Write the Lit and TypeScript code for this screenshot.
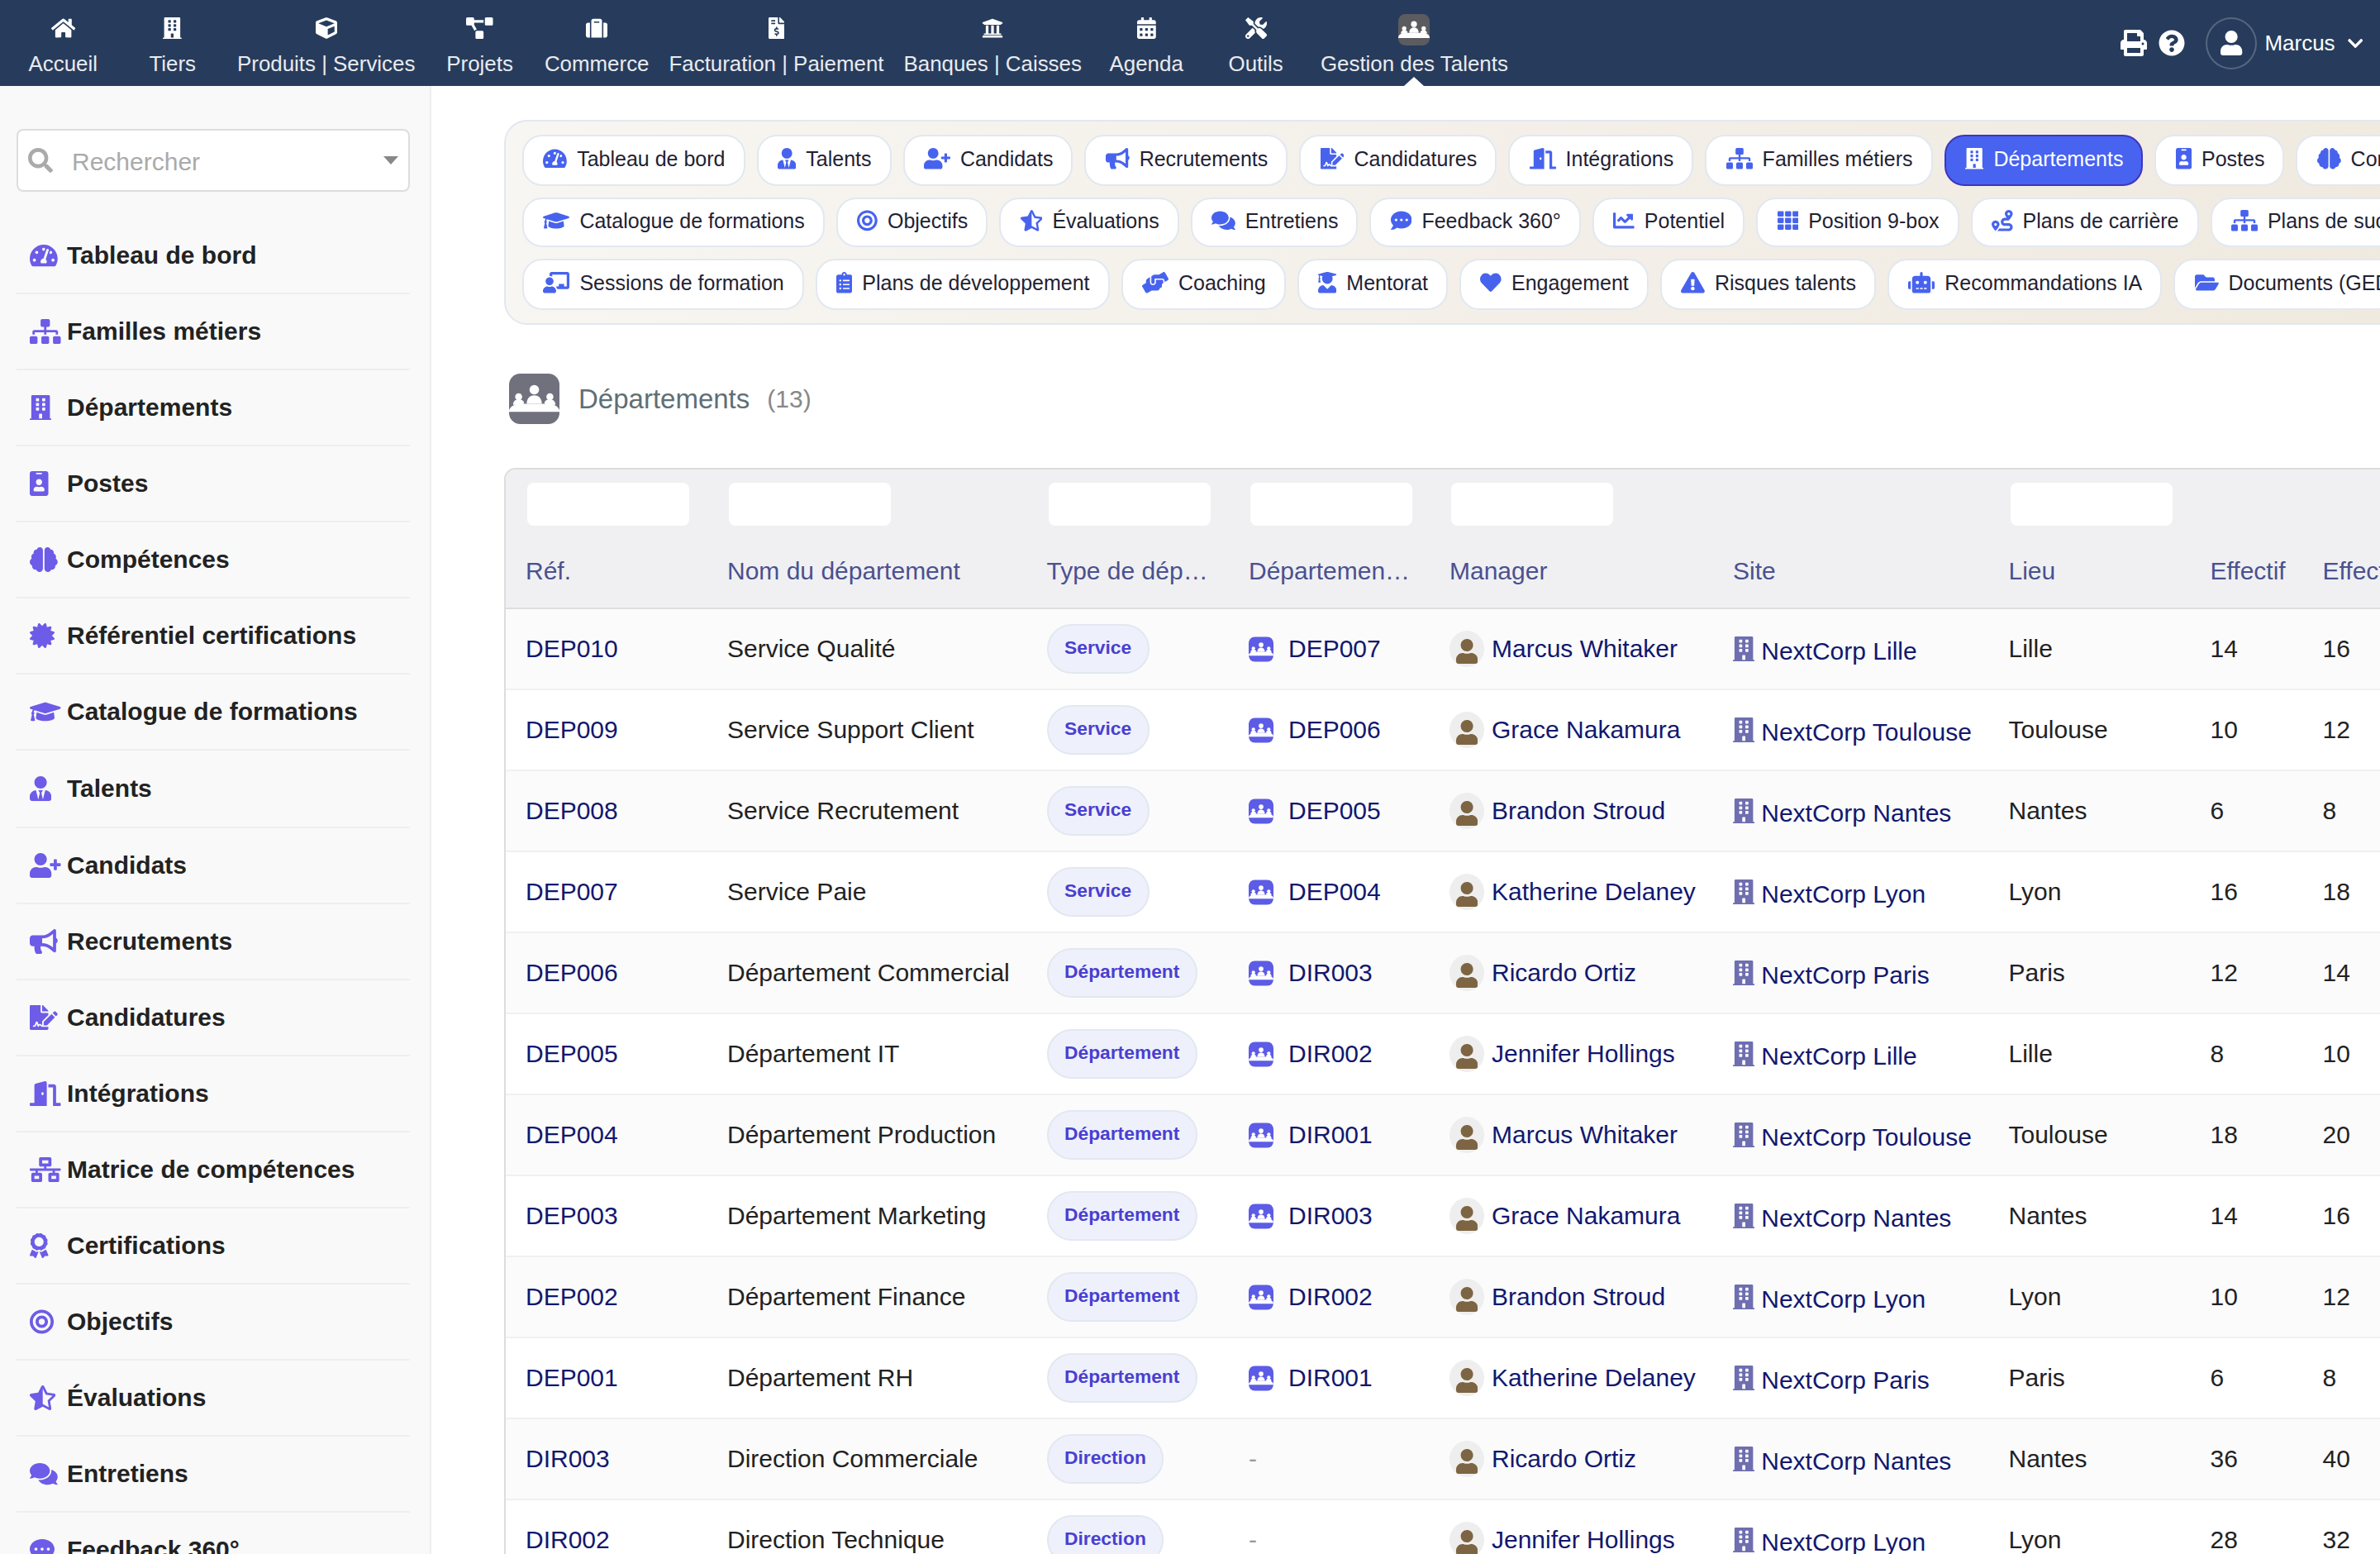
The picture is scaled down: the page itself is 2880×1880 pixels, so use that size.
import { LitElement, html, css } from "lit";
import { customElement } from "lit/decorators.js";

// Solid glyphs, all drawn on a 512 high box. [box width, path]
const ICONS: Record<string, [number, string]> = {
  home: [576, "M280.37 148.26L96 300.11V464a16 16 0 0 0 16 16l112.06-.29a16 16 0 0 0 15.92-16V368a16 16 0 0 1 16-16h64a16 16 0 0 1 16 16v95.64a16 16 0 0 0 16 16.05L464 480a16 16 0 0 0 16-16V300L295.67 148.26a12.19 12.19 0 0 0-15.3 0zM571.6 251.47L488 182.56V44.05a12 12 0 0 0-12-12h-56a12 12 0 0 0-12 12v72.61L318.47 43a48 48 0 0 0-61 0L4.34 251.47a12 12 0 0 0-1.6 16.9l25.5 31A12 12 0 0 0 45.15 301l235.22-193.74a12.19 12.19 0 0 1 15.3 0L530.9 301a12 12 0 0 0 16.9-1.6l25.5-31a12 12 0 0 0-1.7-16.93z"],
  building: [448, "M436 480h-20V24c0-13.255-10.745-24-24-24H56C42.745 0 32 10.745 32 24v456H12c-6.627 0-12 5.373-12 12v20h448v-20c0-6.627-5.373-12-12-12zM128 76c0-6.627 5.373-12 12-12h40c6.627 0 12 5.373 12 12v40c0 6.627-5.373 12-12 12h-40c-6.627 0-12-5.373-12-12V76zm0 96c0-6.627 5.373-12 12-12h40c6.627 0 12 5.373 12 12v40c0 6.627-5.373 12-12 12h-40c-6.627 0-12-5.373-12-12v-40zm52 148h-40c-6.627 0-12-5.373-12-12v-40c0-6.627 5.373-12 12-12h40c6.627 0 12 5.373 12 12v40c0 6.627-5.373 12-12 12zm76 160h-64v-84c0-6.627 5.373-12 12-12h40c6.627 0 12 5.373 12 12v84zm64-172c0 6.627-5.373 12-12 12h-40c-6.627 0-12-5.373-12-12v-40c0-6.627 5.373-12 12-12h40c6.627 0 12 5.373 12 12v40zm0-96c0 6.627-5.373 12-12 12h-40c-6.627 0-12-5.373-12-12v-40c0-6.627 5.373-12 12-12h40c6.627 0 12 5.373 12 12v40zm0-96c0 6.627-5.373 12-12 12h-40c-6.627 0-12-5.373-12-12V76c0-6.627 5.373-12 12-12h40c6.627 0 12 5.373 12 12v40z"],
  cube: [512, "M239.1 6.3l-208 78c-18.7 7-31.1 25-31.1 45v225.1c0 18.2 10.3 34.8 26.5 42.9l208 104c13.5 6.8 29.4 6.8 42.9 0l208-104c16.3-8.1 26.5-24.8 26.5-42.9V129.3c0-20-12.4-37.9-31.1-44.9l-208-78C262 2.2 250 2.2 239.1 6.3zM256 68.4l192 72v1.1l-192 78-192-78v-1.1l192-72zm32 356V275.5l160-65v133.9l-160 80z"],
  project: [640, "M384 320H256c-17.67 0-32 14.33-32 32v128c0 17.67 14.33 32 32 32h128c17.67 0 32-14.33 32-32V352c0-17.67-14.33-32-32-32zM192 32c0-17.67-14.33-32-32-32H32C14.33 0 0 14.33 0 32v128c0 17.67 14.33 32 32 32h95.72l73.16 128.04C211.98 300.98 232.4 288 256 288h.28L192 175.51V128h224V64H192V32zM608 0H480c-17.67 0-32 14.33-32 32v128c0 17.67 14.33 32 32 32h128c17.67 0 32-14.33 32-32V32c0-17.67-14.33-32-32-32z"],
  suitcase: [512, "M128 480h256V80c0-26.5-21.5-48-48-48H176c-26.5 0-48 21.5-48 48v400zm64-384h128v32H192V96zm320 80v256c0 26.5-21.5 48-48 48h-48V128h48c26.5 0 48 21.5 48 48zM96 480H48c-26.5 0-48-21.5-48-48V176c0-26.5 21.5-48 48-48h48v352z"],
  invoice: [384, "M377 105L279.1 7c-4.5-4.5-10.6-7-17-7H256v128h128v-6.1c0-6.3-2.5-12.4-7-16.9zm-153 31V0H24C10.7 0 0 10.7 0 24v464c0 13.3 10.7 24 24 24h336c13.3 0 24-10.7 24-24V160H248c-13.2 0-24-10.8-24-24zM64 72c0-4.42 3.58-8 8-8h80c4.42 0 8 3.58 8 8v16c0 4.42-3.58 8-8 8H72c-4.42 0-8-3.58-8-8V72zm0 80v-16c0-4.42 3.58-8 8-8h80c4.42 0 8 3.58 8 8v16c0 4.42-3.58 8-8 8H72c-4.42 0-8-3.58-8-8zm144 263.88V440c0 4.42-3.58 8-8 8h-16c-4.42 0-8-3.58-8-8v-24.29c-11.29-.58-22.27-4.52-31.37-11.35-3.9-2.93-4.1-8.77-.57-12.14l11.75-11.21c2.77-2.64 6.89-2.76 10.13-.73 3.87 2.42 8.26 3.72 12.82 3.72h28.11c6.5 0 11.8-5.92 11.8-13.19 0-5.95-3.61-11.19-8.77-12.73l-45-13.5c-18.59-5.58-31.58-23.42-31.58-43.39 0-24.52 19.05-44.44 42.67-45.07V232c0-4.42 3.58-8 8-8h16c4.42 0 8 3.58 8 8v24.29c11.29.58 22.27 4.51 31.37 11.35 3.9 2.93 4.1 8.77.57 12.14l-11.75 11.21c-2.77 2.64-6.89 2.76-10.13.73-3.87-2.43-8.26-3.72-12.82-3.72h-28.11c-6.5 0-11.8 5.92-11.8 13.19 0 5.95 3.61 11.19 8.77 12.73l45 13.5c18.59 5.58 31.58 23.42 31.58 43.39 0 24.53-19.05 44.44-42.67 45.07z"],
  bank: [512, "M496 128v16a8 8 0 0 1-8 8h-24v12c0 6.627-5.373 12-12 12H60c-6.627 0-12-5.373-12-12v-12H24a8 8 0 0 1-8-8v-16a8 8 0 0 1 4.941-7.392l232-88a7.996 7.996 0 0 1 6.118 0l232 88A8 8 0 0 1 496 128zm-24 304H40c-13.255 0-24 10.745-24 24v16a8 8 0 0 0 8 8h464a8 8 0 0 0 8-8v-16c0-13.255-10.745-24-24-24zM96 192v192H60c-6.627 0-12 5.373-12 12v20h416v-20c0-6.627-5.373-12-12-12h-36V192h-64v192h-64V192h-64v192h-64V192H96z"],
  calendar: [448, "M0 464c0 26.5 21.5 48 48 48h352c26.5 0 48-21.5 48-48V192H0v272zm320-196c0-6.6 5.4-12 12-12h40c6.6 0 12 5.4 12 12v40c0 6.6-5.4 12-12 12h-40c-6.6 0-12-5.4-12-12v-40zm0 128c0-6.6 5.4-12 12-12h40c6.6 0 12 5.4 12 12v40c0 6.6-5.4 12-12 12h-40c-6.6 0-12-5.4-12-12v-40zM192 268c0-6.6 5.4-12 12-12h40c6.6 0 12 5.4 12 12v40c0 6.6-5.4 12-12 12h-40c-6.6 0-12-5.4-12-12v-40zm0 128c0-6.6 5.4-12 12-12h40c6.6 0 12 5.4 12 12v40c0 6.6-5.4 12-12 12h-40c-6.6 0-12-5.4-12-12v-40zM64 268c0-6.6 5.4-12 12-12h40c6.6 0 12 5.4 12 12v40c0 6.6-5.4 12-12 12H76c-6.6 0-12-5.4-12-12v-40zm0 128c0-6.6 5.4-12 12-12h40c6.6 0 12 5.4 12 12v40c0 6.6-5.4 12-12 12H76c-6.6 0-12-5.4-12-12v-40zM400 64h-48V16c0-8.8-7.2-16-16-16h-32c-8.8 0-16 7.2-16 16v48H160V16c0-8.8-7.2-16-16-16h-32c-8.8 0-16 7.2-16 16v48H48C21.5 64 0 85.5 0 112v48h448v-48c0-26.5-21.5-48-48-48z"],
  tools: [512, "M501.1 395.7L384 278.6c-23.1-23.1-57.6-27.6-85.4-13.9L192 158.1V96L64 0 0 64l96 128h62.1l106.6 106.6c-13.6 27.8-9.2 62.3 13.9 85.4l117.1 117.1c14.6 14.6 38.2 14.6 52.7 0l52.7-52.7c14.5-14.6 14.5-38.2 0-52.7zM331.7 225c28.3 0 54.9 11 74.9 31l19.4 19.4c15.8-6.9 30.8-16.5 43.8-29.5 37.1-37.1 49.7-89.3 37.9-136.7-2.2-9-13.5-12.1-20.1-5.5l-74.4 74.4-67.9-11.3L334 98.9l74.4-74.4c6.6-6.6 3.4-17.9-5.7-20.2-47.4-11.7-99.6.9-136.6 37.9-28.5 28.5-41.9 66.1-41.2 103.6l82.1 82.1c8.1-1.9 16.5-2.9 24.7-2.9zm-103.9 82l-56.7-56.7L18.7 402.8c-25 25-25 65.5 0 90.5s65.5 25 90.5 0l123.6-123.6c-7.6-19.9-9.9-41.6-5-62.7zM64 472c-13.2 0-24-10.8-24-24 0-13.3 10.7-24 24-24s24 10.7 24 24c0 13.2-10.7 24-24 24z"],
  print: [512, "M448 192V77.25c0-8.49-3.37-16.62-9.37-22.63L393.37 9.37c-6-6-14.14-9.37-22.63-9.37H96C78.33 0 64 14.33 64 32v160c-35.35 0-64 28.65-64 64v112c0 8.84 7.16 16 16 16h48v96c0 17.67 14.33 32 32 32h320c17.67 0 32-14.33 32-32v-96h48c8.84 0 16-7.16 16-16V256c0-35.35-28.65-64-64-64zm-64 256H128v-96h256v96zm0-224H128V64h192v48c0 8.84 7.16 16 16 16h48v96zm48 72c-13.25 0-24-10.75-24-24 0-13.26 10.75-24 24-24s24 10.74 24 24c0 13.25-10.75 24-24 24z"],
  question: [512, "M504 256c0 136.997-111.043 248-248 248S8 392.997 8 256C8 119.083 119.043 8 256 8s248 111.083 248 248zM262.655 90c-54.497 0-89.255 22.957-116.549 63.758-3.536 5.286-2.353 12.415 2.715 16.258l34.699 26.31c5.205 3.947 12.621 3.008 16.665-2.122 17.864-22.658 30.113-35.797 57.303-35.797 20.429 0 45.698 13.148 45.698 32.958 0 14.976-12.363 22.667-32.534 33.976C247.128 238.528 216 254.941 216 296v4c0 6.627 5.373 12 12 12h56c6.627 0 12-5.373 12-12v-1.333c0-28.462 83.186-29.647 83.186-106.667 0-58.002-60.165-102-116.531-102zM256 338c-25.365 0-46 20.635-46 46 0 25.364 20.635 46 46 46s46-20.636 46-46c0-25.365-20.635-46-46-46z"],
  user: [448, "M224 256c70.7 0 128-57.3 128-128S294.7 0 224 0 96 57.3 96 128s57.3 128 128 128zm89.6 32h-16.7c-22.2 10.2-46.9 16-72.9 16s-50.6-5.8-72.9-16h-16.7C60.2 288 0 348.2 0 422.4V464c0 26.5 21.5 48 48 48h352c26.5 0 48-21.5 48-48v-41.6c0-74.2-60.2-134.4-134.4-134.4z"],
  chevron: [448, "M207.029 381.476L12.686 187.132c-9.373-9.373-9.373-24.569 0-33.941l22.667-22.667c9.357-9.357 24.522-9.375 33.901-.04L224 284.505l154.745-154.021c9.379-9.335 24.544-9.317 33.901.04l22.667 22.667c9.373 9.373 9.373 24.569 0 33.941L240.971 381.476c-9.373 9.372-24.569 9.372-33.942 0z"],
  search: [512, "M505 442.7L405.3 343c-4.5-4.5-10.6-7-17-7H372c27.6-35.3 44-79.7 44-128C416 93.1 322.9 0 208 0S0 93.1 0 208s93.1 208 208 208c48.3 0 92.7-16.4 128-44v16.3c0 6.4 2.5 12.5 7 17l99.7 99.7c9.4 9.4 24.6 9.4 33.9 0l28.3-28.3c9.4-9.4 9.4-24.6.1-34zM208 336c-70.7 0-128-57.2-128-128 0-70.7 57.2-128 128-128 70.7 0 128 57.2 128 128 0 70.7-57.2 128-128 128z"],
  gauge: [576, "M288 32C128.94 32 0 160.94 0 320c0 52.8 14.25 102.26 39.06 144.8 5.61 9.62 16.3 15.2 27.44 15.2h443c11.14 0 21.83-5.58 27.44-15.2C561.75 422.26 576 372.8 576 320c0-159.06-128.94-288-288-288zm0 64c14.71 0 26.58 10.13 30.32 23.65-1.11 2.26-2.64 4.23-3.45 6.67l-9.22 27.67c-5.13 3.49-10.97 6.01-17.64 6.01-17.67 0-32-14.33-32-32S270.33 96 288 96zM96 384c-17.67 0-32-14.33-32-32s14.33-32 32-32 32 14.33 32 32-14.33 32-32 32zm48-160c-17.67 0-32-14.33-32-32s14.33-32 32-32 32 14.33 32 32-14.33 32-32 32zm246.77-72.41l-61.33 184C343.13 347.33 352 364.54 352 384c0 11.72-3.38 22.55-8.88 32H232.88c-5.5-9.45-8.88-20.28-8.88-32 0-33.94 26.5-61.43 59.9-63.59l61.34-184.01c4.17-12.56 17.73-19.45 30.36-15.17 12.57 4.19 19.35 17.79 15.17 30.36zm14.66 57.2l15.52-46.55c3.47-1.29 7.13-2.23 11.05-2.23 17.67 0 32 14.33 32 32s-14.33 32-32 32c-11.38-.01-20.89-6.28-26.57-15.22zM480 384c-17.67 0-32-14.33-32-32s14.33-32 32-32 32 14.33 32 32-14.33 32-32 32z"],
  sitemap: [640, "M128 352H32c-17.67 0-32 14.33-32 32v96c0 17.67 14.33 32 32 32h96c17.67 0 32-14.33 32-32v-96c0-17.67-14.33-32-32-32zm-24-80h192v48h48v-48h192v48h48v-57.59c0-21.17-17.23-38.41-38.41-38.41H344v-64h40c17.67 0 32-14.33 32-32V32c0-17.67-14.33-32-32-32H256c-17.67 0-32 14.33-32 32v96c0 17.67 14.33 32 32 32h40v64H94.41C73.23 224 56 241.23 56 262.41V320h48v-48zm264 80h-96c-17.67 0-32 14.33-32 32v96c0 17.67 14.33 32 32 32h96c17.67 0 32-14.33 32-32v-96c0-17.67-14.33-32-32-32zm240 0h-96c-17.67 0-32 14.33-32 32v96c0 17.67 14.33 32 32 32h96c17.67 0 32-14.33 32-32v-96c0-17.67-14.33-32-32-32z"],
  badge: [384, "M336 0H48C21.5 0 0 21.5 0 48v416c0 26.5 21.5 48 48 48h288c26.5 0 48-21.5 48-48V48c0-26.5-21.5-48-48-48zM144 32h96c8.8 0 16 7.2 16 16s-7.2 16-16 16h-96c-8.8 0-16-7.2-16-16s7.2-16 16-16zm48 128c35.3 0 64 28.7 64 64s-28.7 64-64 64-64-28.7-64-64 28.7-64 64-64zm112 236.8c0 10.6-10 19.2-22.4 19.2H102.4C90 416 80 407.4 80 396.8v-19.2c0-31.8 30.1-57.6 67.2-57.6h5c12.3 5.1 25.7 8 39.8 8s27.6-2.9 39.8-8h5c37.1 0 67.2 25.8 67.2 57.6v19.2z"],
  brain: [576, "M208 0c-29.9 0-54.7 20.5-61.8 48.2-.8 0-1.4-.2-2.2-.2-35.3 0-64 28.7-64 64 0 4.8.6 9.5 1.7 14C52.5 138 32 166.6 32 200c0 12.6 3.2 24.3 8.3 34.9C16.3 248.7 0 274.3 0 304c0 33.3 20.4 61.9 49.4 73.9-.9 4.6-1.4 9.3-1.4 14.1 0 39.8 32.2 72 72 72 4.1 0 8.1-.5 12-1.2 9.6 28.5 36.2 49.2 68 49.2 39.8 0 72-32.2 72-72V64c0-35.3-28.7-64-64-64zm368 304c0-29.7-16.3-55.3-40.3-69.1 5.2-10.6 8.3-22.3 8.3-34.9 0-33.4-20.5-62-49.7-74 1-4.5 1.7-9.2 1.7-14 0-35.3-28.7-64-64-64-.8 0-1.5.2-2.2.2C422.7 20.5 397.9 0 368 0c-35.3 0-64 28.6-64 64v376c0 39.8 32.2 72 72 72 31.8 0 58.4-20.7 68-49.2 3.9.7 7.9 1.2 12 1.2 39.8 0 72-32.2 72-72 0-4.8-.5-9.5-1.4-14.1 29-12 49.4-40.6 49.4-73.9z"],
  certificate: [512, "M458.622 255.92l45.985-45.005c13.708-12.977 7.316-36.039-10.664-40.339l-62.65-15.99 17.661-62.015c4.991-17.838-11.829-34.663-29.661-29.671l-61.994 17.667-15.984-62.671C337.085.197 313.765-6.276 300.99 7.228L256 53.57 211.011 7.229c-12.63-13.351-36.047-7.234-40.325 10.668l-15.984 62.671-61.995-17.667C74.87 57.907 58.056 74.738 63.046 92.572l17.661 62.015-62.65 15.99C.069 174.878-6.31 197.944 7.392 210.915l45.985 45.005-45.985 45.004c-13.708 12.977-7.316 36.039 10.664 40.339l62.65 15.99-17.661 62.015c-4.991 17.838 11.829 34.663 29.661 29.671l61.994-17.667 15.984 62.671c4.439 18.575 27.696 24.018 40.325 10.668L256 458.61l44.989 46.001c12.5 13.488 35.987 7.486 40.325-10.668l15.984-62.671 61.994 17.667c17.836 4.994 34.651-11.837 29.661-29.671l-17.661-62.015 62.65-15.99c17.987-4.302 24.366-27.367 10.664-40.339l-45.984-45.004z"],
  cap: [640, "M622.34 153.2L343.4 67.5c-15.2-4.67-31.6-4.67-46.79 0L17.66 153.2c-23.54 7.23-23.54 38.36 0 45.59l48.63 14.94c-10.67 13.19-17.23 29.28-17.88 46.9C38.78 266.15 32 276.11 32 288c0 10.78 5.68 19.85 13.86 25.65L20.33 428.53C18.11 438.52 25.71 448 35.94 448h56.11c10.24 0 17.84-9.48 15.62-19.47L82.14 313.65C90.32 307.85 96 298.78 96 288c0-11.57-6.47-21.25-15.66-26.87.76-15.02 8.44-28.3 20.69-36.72L296.6 284.5c9.06 2.78 26.44 6.25 46.79 0l278.95-85.7c23.55-7.24 23.55-38.36 0-45.6zM352.79 315.09c-28.53 8.76-52.84 3.92-65.59 0l-145.02-44.55L128 384c0 35.35 85.96 64 192 64s192-28.65 192-64l-14.18-113.47-145.03 44.56z"],
  userTie: [448, "M224 256c70.7 0 128-57.3 128-128S294.7 0 224 0 96 57.3 96 128s57.3 128 128 128zm95.8 32.6L272 480l-32-136 32-56h-96l32 56-32 136-47.8-191.4C56.9 292 0 350.3 0 422.4V464c0 26.5 21.5 48 48 48h352c26.5 0 48-21.5 48-48v-41.6c0-72.1-56.9-130.4-128.2-133.8z"],
  userPlus: [640, "M624 208h-64v-64c0-8.8-7.2-16-16-16h-32c-8.8 0-16 7.2-16 16v64h-64c-8.8 0-16 7.2-16 16v32c0 8.8 7.2 16 16 16h64v64c0 8.8 7.2 16 16 16h32c8.8 0 16-7.2 16-16v-64h64c8.8 0 16-7.2 16-16v-32c0-8.8-7.2-16-16-16zm-400 48c70.7 0 128-57.3 128-128S294.7 0 224 0 96 57.3 96 128s57.3 128 128 128zm89.6 32h-16.7c-22.2 10.2-46.9 16-72.9 16s-50.6-5.8-72.9-16h-16.7C60.2 288 0 348.2 0 422.4V464c0 26.5 21.5 48 48 48h352c26.5 0 48-21.5 48-48v-41.6c0-74.2-60.2-134.4-134.4-134.4z"],
  bullhorn: [576, "M576 240c0-23.63-12.95-44.04-32-55.12V32.01C544 23.26 537.02 0 512 0c-7.12 0-14.19 2.38-19.98 7.02l-85.03 68.03C364.28 109.19 310.66 128 256 128H64c-35.35 0-64 28.65-64 64v96c0 35.35 28.65 64 64 64h33.7c-1.39 10.48-2.18 21.14-2.18 32 0 39.77 9.26 77.35 25.56 110.94 5.19 10.69 16.52 17.06 28.4 17.06h74.28c26.05 0 41.69-29.84 25.9-50.56-16.4-21.52-26.15-48.36-26.15-77.44 0-11.11 1.62-21.79 4.41-32H256c54.66 0 108.28 18.81 150.98 52.95l85.03 68.03a32.023 32.023 0 0 0 19.98 7.02c24.92 0 32-22.78 32-32V295.13C563.05 284.04 576 263.63 576 240zm-96 141.42l-33.05-26.44C392.95 311.78 325.12 288 256 288v-96c69.12 0 136.95-23.78 190.95-66.98L480 98.58v282.84z"],
  fileSign: [576, "M218.17 424.14c-2.95-5.92-8.09-6.52-10.17-6.52s-7.22.59-10.02 6.19l-7.67 15.34c-6.37 12.78-25.03 11.37-29.48-2.09L144 386.59l-10.61 31.88c-5.89 17.66-22.38 29.53-41 29.53H80c-8.84 0-16-7.16-16-16s7.16-16 16-16h12.39c4.83 0 9.11-3.08 10.64-7.66l18.19-54.64c3.3-9.81 12.44-16.41 22.78-16.41s19.48 6.59 22.77 16.41l13.88 41.64c19.75-16.19 54.06-9.7 66 14.16 1.89 3.78 5.49 5.95 9.36 6.26v-82.12l128-127.09V160H248c-13.2 0-24-10.8-24-24V0H24C10.7 0 0 10.7 0 24v464c0 13.3 10.7 24 24 24h336c13.3 0 24-10.7 24-24v-40l-128-.14c-16.12-.01-30.81-9.03-37.83-23.72zM384 121.9c0-6.3-2.5-12.4-7-16.9L279.1 7c-4.5-4.5-10.6-7-17-7H256v128h128v-6.1zm-96 225.06V416h68.99l161.68-162.78-67.88-67.88L288 346.96zm280.54-179.63l-31.87-31.87c-9.94-9.94-26.07-9.94-36.01 0l-27.25 27.25 67.88 67.88 27.25-27.25c9.95-9.94 9.95-26.07 0-36.01z"],
  door: [640, "M624 448h-80V113.45C544 86.19 522.47 64 496 64H384v64h96v384h144c8.84 0 16-7.16 16-16v-32c0-8.84-7.16-16-16-16zM312.24 1.01l-192 49.74C105.99 54.44 96 67.7 96 82.92V448H16c-8.84 0-16 7.16-16 16v32c0 8.84 7.16 16 16 16h336V33.18c0-21.58-19.56-37.41-39.76-32.17zM264 288c-13.25 0-24-14.33-24-32s10.75-32 24-32 24 14.33 24 32-10.75 32-24 32z"],
  network: [640, "M640 264v-16c0-8.84-7.16-16-16-16H344v-40h72c17.67 0 32-14.33 32-32V32c0-17.67-14.33-32-32-32H224c-17.67 0-32 14.33-32 32v128c0 17.67 14.33 32 32 32h72v40H16c-8.84 0-16 7.16-16 16v16c0 8.84 7.16 16 16 16h104v40H64c-17.67 0-32 14.33-32 32v128c0 17.67 14.33 32 32 32h160c17.67 0 32-14.33 32-32V352c0-17.67-14.33-32-32-32h-56v-40h304v40h-56c-17.67 0-32 14.33-32 32v128c0 17.67 14.33 32 32 32h160c17.67 0 32-14.33 32-32V352c0-17.67-14.33-32-32-32h-56v-40h104c8.84 0 16-7.16 16-16zM256 128V64h128v64H256zm-64 320H96v-64h96v64zm352 0h-96v-64h96v64z"],
  award: [384, "M97.12 362.63c-8.69-8.69-4.16-6.24-25.12-11.85-9.51-2.55-17.87-7.45-25.43-13.32L1.2 448.7c-4.39 10.77 3.81 22.47 15.43 22.03l52.69-2.01L105.56 507c8 8.44 22.04 5.81 26.43-4.96l52.05-127.62c-10.84 6.04-22.87 9.58-35.31 9.58-19.5 0-37.82-7.59-51.61-21.37zM382.8 448.7l-45.37-111.24c-7.56 5.88-15.92 10.77-25.43 13.32-21.07 5.64-16.45 3.18-25.12 11.85-13.79 13.78-32.12 21.37-51.62 21.37-12.44 0-24.47-3.55-35.31-9.58L252 502.04c4.39 10.77 18.44 13.4 26.43 4.96l36.25-38.28 52.69 2.01c11.62.44 19.82-11.27 15.43-22.03zM263 340c15.28-15.55 17.03-14.21 38.79-20.14 13.89-3.79 24.75-14.84 28.47-28.98 7.48-28.4 5.54-24.97 25.95-45.75 10.17-10.35 14.14-25.44 10.42-39.58-7.47-28.38-7.48-24.42 0-52.83 3.72-14.14-.25-29.23-10.42-39.58-20.41-20.78-18.47-17.36-25.95-45.75-3.72-14.14-14.58-25.19-28.47-28.98-27.88-7.61-24.52-5.62-44.95-26.41-10.17-10.35-25-14.4-38.89-10.61-27.87 7.6-23.98 7.61-51.9 0-13.89-3.79-28.72.25-38.89 10.61-20.41 20.78-17.05 18.8-44.94 26.41-13.89 3.79-24.75 14.84-28.47 28.98-7.47 28.39-5.54 24.97-25.95 45.75-10.17 10.35-14.15 25.44-10.42 39.58 7.47 28.36 7.48 24.4 0 52.82-3.72 14.14.25 29.23 10.42 39.59 20.41 20.78 18.47 17.35 25.95 45.75 3.72 14.14 14.58 25.19 28.47 28.98C104.6 325.96 106.27 325 121 340c13.23 13.47 33.84 15.88 49.74 5.82a39.676 39.676 0 0 1 42.53 0c15.89 10.06 36.5 7.65 49.73-5.82zM97.66 175.96c0-53.03 42.24-96.02 94.34-96.02s94.34 42.99 94.34 96.02-42.24 96.02-94.34 96.02-94.34-42.99-94.34-96.02z"],
  bullseye: [496, "M248 8C111.03 8 0 119.03 0 256s111.03 248 248 248 248-111.03 248-248S384.97 8 248 8zm0 432c-101.69 0-184-82.29-184-184 0-101.69 82.29-184 184-184 101.69 0 184 82.29 184 184 0 101.69-82.29 184-184 184zm0-312c-70.69 0-128 57.31-128 128s57.31 128 128 128 128-57.31 128-128-57.31-128-128-128zm0 192c-35.29 0-64-28.71-64-64s28.71-64 64-64 64 28.71 64 64-28.71 64-64 64z"],
  star: [536, "M508.55 171.51L362.18 150.2 296.77 17.81C290.89 5.98 279.42 0 267.95 0c-11.4 0-22.79 5.9-28.69 17.81l-65.43 132.38-146.38 21.29c-26.25 3.8-36.77 36.09-17.74 54.59l105.89 103-25.06 145.48C86.98 495.33 103.57 512 122.15 512c4.93 0 10-1.17 14.87-3.75l130.95-68.68 130.94 68.7c4.86 2.55 9.92 3.71 14.83 3.71 18.6 0 35.22-16.61 31.66-37.4l-25.03-145.49 105.91-102.98c19.04-18.5 8.52-50.8-17.73-54.6zm-121.74 123.2l-18.12 17.62 4.28 24.88 19.52 113.45-102.13-53.59-22.38-11.74.03-317.19 51.03 103.29 11.18 22.63 25.01 3.64 114.23 16.63-82.65 80.38z"],
  comments: [576, "M416 192c0-88.4-93.1-160-208-160S0 103.6 0 192c0 34.3 14.1 65.9 38 92-13.4 30.2-35.5 54.2-35.8 54.5-2.2 2.3-2.8 5.7-1.5 8.7S4.8 352 8 352c36.6 0 66.9-12.3 88.7-25 32.2 15.7 70.3 25 111.3 25 114.9 0 208-71.6 208-160zm122 220c23.9-26 38-57.7 38-92 0-66.9-53.5-124.2-129.3-148.1.9 6.6 1.3 13.3 1.3 20.1 0 105.9-107.7 192-240 192-10.8 0-21.3-.8-31.7-1.9C207.8 439.6 281.8 480 368 480c41 0 79.1-9.2 111.3-25 21.8 12.7 52.1 25 88.7 25 3.2 0 6.1-1.9 7.3-4.8 1.3-2.9.7-6.3-1.5-8.7-.3-.3-22.4-24.2-35.8-54.5z"],
  commentDots: [512, "M256 32C114.6 32 0 125.1 0 240c0 49.6 21.4 95 57 130.7C44.5 421.1 2.7 466 2.2 466.5c-2.2 2.3-2.8 5.7-1.5 8.7S4.8 480 8 480c66.3 0 116-31.8 140.6-51.4 32.7 12.3 69 19.4 107.4 19.4 141.4 0 256-93.1 256-208S397.4 32 256 32zM128 272c-17.7 0-32-14.3-32-32s14.3-32 32-32 32 14.3 32 32-14.3 32-32 32zm128 0c-17.7 0-32-14.3-32-32s14.3-32 32-32 32 14.3 32 32-14.3 32-32 32zm128 0c-17.7 0-32-14.3-32-32s14.3-32 32-32 32 14.3 32 32-14.3 32-32 32z"],
  chart: [512, "M496 384H64V80c0-8.84-7.16-16-16-16H16C7.16 64 0 71.16 0 80v336c0 17.67 14.33 32 32 32h464c8.84 0 16-7.16 16-16v-32c0-8.84-7.16-16-16-16zM464 96H345.94c-21.38 0-32.09 25.85-16.97 40.97l32.4 32.4L288 242.75l-73.37-73.37c-12.5-12.5-32.76-12.5-45.25 0l-68.69 68.69c-6.25 6.25-6.25 16.38 0 22.63l22.62 22.62c6.25 6.25 16.38 6.25 22.63 0L192 237.25l73.37 73.37c12.5 12.5 32.76 12.5 45.25 0l96-96 32.4 32.4c15.12 15.12 40.97 4.41 40.97-16.97V112c.01-8.84-7.15-16-15.99-16z"],
  grid: [512, "M149.333 56v80c0 13.255-10.745 24-24 24H24c-13.255 0-24-10.745-24-24V56c0-13.255 10.745-24 24-24h101.333c13.255 0 24 10.745 24 24zm181.334 240v-80c0-13.255-10.745-24-24-24H205.333c-13.255 0-24 10.745-24 24v80c0 13.255 10.745 24 24 24h101.333c13.256 0 24.001-10.745 24.001-24zm32-240v80c0 13.255 10.745 24 24 24H488c13.255 0 24-10.745 24-24V56c0-13.255-10.745-24-24-24H386.667c-13.255 0-24 10.745-24 24zm-32 80V56c0-13.255-10.745-24-24-24H205.333c-13.255 0-24 10.745-24 24v80c0 13.255 10.745 24 24 24h101.333c13.256 0 24.001-10.745 24.001-24zm-205.334 56H24c-13.255 0-24 10.745-24 24v80c0 13.255 10.745 24 24 24h101.333c13.255 0 24-10.745 24-24v-80c0-13.255-10.745-24-24-24zM0 376v80c0 13.255 10.745 24 24 24h101.333c13.255 0 24-10.745 24-24v-80c0-13.255-10.745-24-24-24H24c-13.255 0-24 10.745-24 24zm386.667-56H488c13.255 0 24-10.745 24-24v-80c0-13.255-10.745-24-24-24H386.667c-13.255 0-24 10.745-24 24v80c0 13.255 10.745 24 24 24zm0 160H488c13.255 0 24-10.745 24-24v-80c0-13.255-10.745-24-24-24H386.667c-13.255 0-24 10.745-24 24v80c0 13.255 10.745 24 24 24zM181.333 376v80c0 13.255 10.745 24 24 24h101.333c13.255 0 24-10.745 24-24v-80c0-13.255-10.745-24-24-24H205.333c-13.255 0-24 10.745-24 24z"],
  route: [512, "M416 320h-96c-17.6 0-32-14.4-32-32s14.4-32 32-32h96s96-107 96-160-43-96-96-96-96 43-96 96c0 25.5 22.2 63.4 45.3 96H320c-52.9 0-96 43.1-96 96s43.1 96 96 96h96c17.6 0 32 14.4 32 32s-14.4 32-32 32H185.5c-16 24.8-33.8 47.7-47.3 64H416c52.9 0 96-43.1 96-96s-43.1-96-96-96zm0-256c17.7 0 32 14.3 32 32s-14.3 32-32 32-32-14.3-32-32 14.3-32 32-32zM96 256c-53 0-96 43-96 96s96 160 96 160 96-107 96-160-43-96-96-96zm0 128c-17.7 0-32-14.3-32-32s14.3-32 32-32 32 14.3 32 32-14.3 32-32 32z"],
  teacher: [640, "M208 352c-2.39 0-4.78.35-7.06 1.09C187.98 357.3 174.35 360 160 360c-14.35 0-27.98-2.7-40.95-6.91-2.28-.74-4.66-1.09-7.05-1.09C49.94 352-.33 402.48 0 464.62.14 490.88 21.73 512 48 512h224c26.27 0 47.86-21.12 48-47.38.33-62.14-49.94-112.62-112-112.62zm-48-32c53.02 0 96-42.98 96-96s-42.98-96-96-96-96 42.98-96 96 42.98 96 96 96zM592 0H208c-26.47 0-48 22.25-48 49.59V96c23.42 0 45.1 6.78 64 17.8V64h352v288h-64v-64H384v64h-76.24c19.1 16.69 33.12 38.73 39.69 64H592c26.47 0 48-22.25 48-49.59V49.59C640 22.25 618.47 0 592 0z"],
  clipboard: [384, "M336 64h-80c0-35.3-28.7-64-64-64s-64 28.7-64 64H48C21.5 64 0 85.5 0 112v352c0 26.5 21.5 48 48 48h288c26.5 0 48-21.5 48-48V112c0-26.5-21.5-48-48-48zM96 424c-13.3 0-24-10.7-24-24s10.7-24 24-24 24 10.7 24 24-10.7 24-24 24zm0-96c-13.3 0-24-10.7-24-24s10.7-24 24-24 24 10.7 24 24-10.7 24-24 24zm0-96c-13.3 0-24-10.7-24-24s10.7-24 24-24 24 10.7 24 24-10.7 24-24 24zm96-192c13.3 0 24 10.7 24 24s-10.7 24-24 24-24-10.7-24-24 10.7-24 24-24zm128 368c0 4.4-3.6 8-8 8H168c-4.4 0-8-3.6-8-8v-16c0-4.4 3.6-8 8-8h144c4.4 0 8 3.6 8 8v16zm0-96c0 4.4-3.6 8-8 8H168c-4.4 0-8-3.6-8-8v-16c0-4.4 3.6-8 8-8h144c4.4 0 8 3.6 8 8v16zm0-96c0 4.4-3.6 8-8 8H168c-4.4 0-8-3.6-8-8v-16c0-4.4 3.6-8 8-8h144c4.4 0 8 3.6 8 8v16z"],
  hands: [640, "M488 192H336v56c0 39.7-32.3 72-72 72s-72-32.3-72-72V126.4l-64.9 39C107.8 176.9 96 197.8 96 220.2v47.3l-80 46.2C.7 322.5-4.6 342.1 4.3 357.4l80 138.6c8.8 15.3 28.4 20.5 43.7 11.7L231.4 448H368c35.3 0 64-28.7 64-64h16c17.7 0 32-14.3 32-32v-64h8c13.3 0 24-10.7 24-24v-48c0-13.3-10.7-24-24-24zm147.7-37.4L555.7 16C546.9.7 527.3-4.5 512 4.3L408.6 64H306.4c-12 0-23.7 3.4-33.9 9.7L239 94.6c-9.4 5.8-15 16.1-15 27.1V248c0 22.1 17.9 40 40 40s40-17.9 40-40v-88h184c30.9 0 56 25.1 56 56v28.5l80-46.2c15.3-8.9 20.5-28.4 11.7-43.7z"],
  graduate: [448, "M319.4 320.6L224 416l-95.4-95.4C57.1 323.7 0 382.2 0 454.4v9.6c0 26.5 21.5 48 48 48h352c26.5 0 48-21.5 48-48v-9.6c0-72.2-57.1-130.7-128.6-133.8zM13.6 79.8l6.4 1.5v58.4c-7 4.2-12 11.5-12 20.3 0 8.4 4.6 15.4 11.1 19.7L3.5 242c-1.7 6.9 2.1 14 7.6 14h41.8c5.5 0 9.3-7.1 7.6-14l-15.6-62.3C51.4 175.4 56 168.4 56 160c0-8.8-5-16.1-12-20.3V87.1l66 15.9c-8.6 17.2-14 36.4-14 57 0 70.7 57.3 128 128 128s128-57.3 128-128c0-20.6-5.3-39.8-14-57l96.3-23.2c18.2-4.4 18.2-27.1 0-31.5l-190.4-46c-13-3.1-26.7-3.1-39.7 0L13.6 48.2c-18.1 4.4-18.1 27.2 0 31.6z"],
  heart: [512, "M462.3 62.6C407.5 15.9 326 24.3 275.7 76.2L256 96.5l-19.7-20.3C186.1 24.3 104.5 15.9 49.7 62.6c-62.8 53.6-66.1 149.8-9.9 207.9l193.5 199.8c12.5 12.9 32.8 12.9 45.3 0l193.5-199.8c56.3-58.1 53-154.3-9.8-207.9z"],
  warning: [576, "M569.517 440.013C587.975 472.007 564.806 512 527.94 512H48.054c-36.937 0-59.999-40.055-41.577-71.987L246.423 23.985c18.467-32.009 64.72-31.951 83.154 0l239.94 416.028zM288 354c-25.405 0-46 20.595-46 46s20.595 46 46 46 46-20.595 46-46-20.595-46-46-46zm-43.673-165.346l7.418 136c.347 6.364 5.609 11.346 11.982 11.346h48.546c6.373 0 11.635-4.982 11.982-11.346l7.418-136c.375-6.874-5.098-12.654-11.982-12.654h-63.383c-6.884 0-12.356 5.78-11.981 12.654z"],
  robot: [640, "M32,224H64V416H32A31.96166,31.96166,0,0,1,0,384V256A31.96166,31.96166,0,0,1,32,224Zm512-48V448a64.06328,64.06328,0,0,1-64,64H160a64.06328,64.06328,0,0,1-64-64V176a79.974,79.974,0,0,1,80-80H288V32a32,32,0,0,1,64,0V96H464A79.974,79.974,0,0,1,544,176ZM264,256a40,40,0,1,0-40,40A39.997,39.997,0,0,0,264,256Zm-8,128H192v32h64Zm96,0H288v32h64ZM456,256a40,40,0,1,0-40,40A39.997,39.997,0,0,0,456,256Zm-8,128H384v32h64ZM640,256V384a31.96166,31.96166,0,0,1-32,32H576V224h32A31.96166,31.96166,0,0,1,640,256Z"],
  folder: [576, "M572.694 292.093L500.27 416.248A63.997 63.997 0 0 1 444.989 448H45.025c-18.523 0-30.064-20.093-20.731-36.093l72.424-124.155A64 64 0 0 1 152 256h399.964c18.523 0 30.064 20.093 20.73 36.093zM152 224h328v-48c0-26.51-21.49-48-48-48H272l-64-64H48C21.49 64 0 85.49 0 112v278.046l69.077-118.418C86.214 242.25 118.554 224 152 224z"],
};

const icon = (name: string, size: number) => {
  const [w, d] = ICONS[name];
  return html`<svg class="ico" viewBox="0 0 ${w} 512" width=${(size * w) / 512} height=${size} fill="currentColor"><path d=${d}></path></svg>`;
};

// Rounded tile with three people behind a table, used for the module logo
const peopleTile = (w: number, h: number, cls: string) => html`
  <svg class=${cls} viewBox="0 0 100 100" width=${w} height=${h}>
    <rect class="tile-bg" width="100" height="100" rx="22"></rect>
    <g fill="#fff">
      <circle cx="50" cy="32" r="9.5"></circle>
      <path d="M35 60c0-11 6-17 15-17s15 6 15 17z"></path>
      <circle cx="19" cy="46" r="7"></circle>
      <path d="M8 62c0-7 5-11 11-11s10 3 11 7l-3 4z"></path>
      <circle cx="81" cy="46" r="7"></circle>
      <path d="M92 62c0-7-5-11-11-11s-10 3-11 7l3 4z"></path>
      <path d="M0 76v-3c2-8 12-13 22-13h56c10 0 20 5 22 13v3z"></path>
    </g>
  </svg>
`;

const NAV = [
  { label: "Accueil", icon: "home" },
  { label: "Tiers", icon: "building" },
  { label: "Produits | Services", icon: "cube" },
  { label: "Projets", icon: "project" },
  { label: "Commerce", icon: "suitcase" },
  { label: "Facturation | Paiement", icon: "invoice" },
  { label: "Banques | Caisses", icon: "bank" },
  { label: "Agenda", icon: "calendar" },
  { label: "Outils", icon: "tools" },
];

const SIDE = [
  ["gauge", "Tableau de bord"],
  ["sitemap", "Familles métiers"],
  ["building", "Départements"],
  ["badge", "Postes"],
  ["brain", "Compétences"],
  ["certificate", "Référentiel certifications"],
  ["cap", "Catalogue de formations"],
  ["userTie", "Talents"],
  ["userPlus", "Candidats"],
  ["bullhorn", "Recrutements"],
  ["fileSign", "Candidatures"],
  ["door", "Intégrations"],
  ["network", "Matrice de compétences"],
  ["award", "Certifications"],
  ["bullseye", "Objectifs"],
  ["star", "Évaluations"],
  ["comments", "Entretiens"],
  ["commentDots", "Feedback 360°"],
];

const CHIP_ROWS = [
  [
    ["gauge", "Tableau de bord"],
    ["userTie", "Talents"],
    ["userPlus", "Candidats"],
    ["bullhorn", "Recrutements"],
    ["fileSign", "Candidatures"],
    ["door", "Intégrations"],
    ["sitemap", "Familles métiers"],
    ["building", "Départements"],
    ["badge", "Postes"],
    ["brain", "Compétences"],
  ],
  [
    ["cap", "Catalogue de formations"],
    ["bullseye", "Objectifs"],
    ["star", "Évaluations"],
    ["comments", "Entretiens"],
    ["commentDots", "Feedback 360°"],
    ["chart", "Potentiel"],
    ["grid", "Position 9-box"],
    ["route", "Plans de carrière"],
    ["sitemap", "Plans de succession"],
  ],
  [
    ["teacher", "Sessions de formation"],
    ["clipboard", "Plans de développement"],
    ["hands", "Coaching"],
    ["graduate", "Mentorat"],
    ["heart", "Engagement"],
    ["warning", "Risques talents"],
    ["robot", "Recommandations IA"],
    ["folder", "Documents (GED)"],
  ],
];

const COLS = [244, 386.5, 244.5, 243, 343, 333.5, 244, 136, 200];

const COLUMNS = [
  { label: "Réf.", filter: true },
  { label: "Nom du département", filter: true },
  { label: "Type de département", filter: true },
  { label: "Département parent", filter: true },
  { label: "Manager", filter: true },
  { label: "Site", filter: false },
  { label: "Lieu", filter: true },
  { label: "Effectif", filter: false },
  { label: "Effectif cible", filter: false },
];

const ROWS = [
  ["DEP010", "Service Qualité", "Service", "DEP007", "Marcus Whitaker", "Lille", 14, 16],
  ["DEP009", "Service Support Client", "Service", "DEP006", "Grace Nakamura", "Toulouse", 10, 12],
  ["DEP008", "Service Recrutement", "Service", "DEP005", "Brandon Stroud", "Nantes", 6, 8],
  ["DEP007", "Service Paie", "Service", "DEP004", "Katherine Delaney", "Lyon", 16, 18],
  ["DEP006", "Département Commercial", "Département", "DIR003", "Ricardo Ortiz", "Paris", 12, 14],
  ["DEP005", "Département IT", "Département", "DIR002", "Jennifer Hollings", "Lille", 8, 10],
  ["DEP004", "Département Production", "Département", "DIR001", "Marcus Whitaker", "Toulouse", 18, 20],
  ["DEP003", "Département Marketing", "Département", "DIR003", "Grace Nakamura", "Nantes", 14, 16],
  ["DEP002", "Département Finance", "Département", "DIR002", "Brandon Stroud", "Lyon", 10, 12],
  ["DEP001", "Département RH", "Département", "DIR001", "Katherine Delaney", "Paris", 6, 8],
  ["DIR003", "Direction Commerciale", "Direction", "", "Ricardo Ortiz", "Nantes", 36, 40],
  ["DIR002", "Direction Technique", "Direction", "", "Jennifer Hollings", "Lyon", 28, 32],
];

@customElement("app-root")
export class AppRoot extends LitElement {
  static styles = css`
    :host {
      display: block;
      height: 1880px;
      overflow: hidden;
      background: #fff;
      font-family: "Liberation Sans", Arial, sans-serif;
      color: #222;
    }

    .ico {
      display: block;
      flex: none;
    }

    /* Top bar */
    .topbar {
      display: flex;
      height: 104px;
      padding-left: 10px;
      background: #273c5c;
      color: #fff;
    }

    .nav-item {
      position: relative;
      display: flex;
      flex-direction: column;
      align-items: center;
      min-width: 132.5px;
      box-sizing: border-box;
      padding: 21px 12px 0;
      white-space: nowrap;
    }

    .nav-label {
      margin-top: 15px;
      font-size: 25.9px;
      line-height: 30px;
      color: #e9ebf0;
    }

    .nav-logo {
      margin: -5px 0 -9px;
    }

    .nav-logo .tile-bg {
      fill: #5b5b60;
    }

    .nav-caret {
      position: absolute;
      bottom: 0;
      left: 50%;
      margin-left: -12px;
      border: 12px solid transparent;
      border-top: 0;
      border-bottom: 11px solid #fff;
    }

    .top-actions {
      display: flex;
      align-items: center;
      margin-left: auto;
      padding-right: 21px;
    }

    .top-actions .help {
      margin-left: 14px;
    }

    .avatar {
      display: flex;
      align-items: center;
      justify-content: center;
      box-sizing: border-box;
      width: 62px;
      height: 63px;
      margin-left: 25px;
      border: 2px solid rgba(255, 255, 255, 0.22);
      border-radius: 50%;
    }

    .user-name {
      margin: 0 15px 0 9px;
      font-size: 26px;
    }

    .layout {
      display: flex;
      height: 1776px;
    }

    /* Sidebar */
    .sidebar {
      flex: none;
      box-sizing: border-box;
      width: 522px;
      padding: 52px 24px 0 20px;
      background: #f9f9f9;
      border-right: 2px solid #eee;
    }

    .search {
      display: flex;
      align-items: center;
      box-sizing: border-box;
      width: 476px;
      height: 76px;
      padding: 0 12px 0 12px;
      background: #fff;
      border: 2px solid #ddd;
      border-radius: 8px;
      color: #aaa;
    }

    .search-text {
      flex: 1;
      margin: 3px 0 0 23px;
      font-size: 30px;
    }

    .search-arrow {
      border: 9px solid transparent;
      border-bottom: 0;
      border-top: 10px solid #888;
    }

    .menu {
      margin-top: 31.5px;
    }

    .menu-item {
      display: flex;
      align-items: center;
      box-sizing: border-box;
      height: 92px;
      padding-left: 16px;
      border-bottom: 2px solid #eee;
      font-size: 30px;
      font-weight: 700;
      white-space: nowrap;
    }

    .menu-item:nth-child(8) {
      height: 94px;
    }

    .menu-icon {
      flex: none;
      width: 45px;
      color: #6c5ce7;
    }

    /* Main */
    .main {
      flex: 1;
      min-width: 0;
      overflow: hidden;
      padding: 41px 0 0 88px;
    }

    .chips {
      box-sizing: border-box;
      width: 2400px;
      height: 248px;
      padding: 16px 20px;
      background: linear-gradient(100deg, #f8f6f2, #efe9df);
      border: 2px solid #e2e8f0;
      border-radius: 28px;
    }

    .chip-row {
      display: flex;
      gap: 14px;
      margin-bottom: 14px;
    }

    .chip {
      display: flex;
      align-items: center;
      gap: 12px;
      flex: none;
      box-sizing: border-box;
      height: 62px;
      padding: 0 22px 4px 23.4px;
      background: #fff;
      border: 2px solid #e2e8f0;
      border-radius: 24px;
      font-size: 25px;
      color: #1f2233;
      white-space: nowrap;
    }

    .chip-row.compact .chip {
      height: 60px;
    }

    .chip .ico {
      color: #4763ee;
    }

    .chip.active {
      background: #4763f0;
      border-color: #4035bd;
      color: #fff;
    }

    .chip.active .ico {
      color: #fff;
    }

    .page-head {
      display: flex;
      align-items: center;
      margin: 59px 0 53px 6px;
    }

    .page-logo .tile-bg {
      fill: #71717e;
    }

    .page-title {
      margin-left: 23px;
      font-size: 33px;
      color: #5f6f75;
    }

    .page-count {
      margin-left: 21px;
      font-size: 30px;
      color: #888;
    }

    /* Table */
    .table-wrap {
      box-sizing: border-box;
      width: 2400px;
      border: 2px solid #ddd;
      border-width: 2px 0 0 2px;
      border-top-left-radius: 14px;
      overflow: hidden;
    }

    table {
      table-layout: fixed;
      width: 2374px;
      border-collapse: collapse;
      font-size: 30px;
    }

    thead {
      background: #f0f0f2;
    }

    th {
      box-sizing: border-box;
    }

    .filter-row th {
      height: 78px;
      padding: 16px 0 0 26px;
      vertical-align: top;
    }

    .filter {
      box-sizing: border-box;
      width: 196px;
      height: 52px;
      background: #fff;
      border-radius: 8px;
    }

    .label-row th {
      height: 90px;
      padding: 0 20px 0 24px;
      border-bottom: 2px solid #ddd;
      overflow: hidden;
      font-weight: 400;
      text-align: left;
      text-overflow: ellipsis;
      white-space: nowrap;
      color: #4a5190;
    }

    .label-row th.num {
      padding-right: 0;
    }

    tbody tr {
      height: 98px;
      border-bottom: 2px solid #f0f0f0;
    }

    tbody tr:nth-child(odd) {
      background: #fbfbfb;
    }

    td {
      padding: 0 0 0 24px;
      white-space: nowrap;
      overflow: hidden;
    }

    .link {
      color: #12186e;
    }

    .pill {
      display: inline-flex;
      align-items: center;
      box-sizing: border-box;
      height: 60px;
      padding: 0 19.5px 4px;
      background: #eef1fc;
      border: 2px solid #e2e8f0;
      border-radius: 30px;
      font-size: 22.8px;
      font-weight: 700;
      color: #4a3fd0;
      vertical-align: middle;
    }

    .with-icon {
      display: flex;
      align-items: center;
    }

    .parent-logo {
      margin-right: 18px;
      border-radius: 8px;
    }

    .parent-logo .tile-bg {
      fill: #5d5ce6;
    }

    .dash {
      color: #999;
    }

    .manager-avatar {
      display: flex;
      align-items: flex-end;
      justify-content: center;
      flex: none;
      box-sizing: border-box;
      width: 42px;
      height: 44px;
      margin-right: 9px;
      padding-bottom: 4px;
      background: #eee;
      border-radius: 50%;
      color: #7d6543;
    }

    .site-icon {
      margin-right: 8px;
      color: #6e6eb0;
    }

    .site-name {
      margin-top: 5px;
    }
  `;

  render() {
    return html`
      ${this.renderTopbar()}
      <div class="layout">
        ${this.renderSidebar()}
        <div class="main">
          <div class="chips">
            ${CHIP_ROWS.map(
              (row, i) => html`
                <div class="chip-row ${i === 1 ? "compact" : ""}">
                  ${row.map(
                    ([ic, label]) => html`
                      <div class="chip ${label === "Départements" ? "active" : ""}">
                        ${icon(ic, 25.6)}<span>${label}</span>
                      </div>
                    `
                  )}
                </div>
              `
            )}
          </div>
          <div class="page-head">
            ${peopleTile(61, 61, "page-logo")}
            <span class="page-title">Départements</span>
            <span class="page-count">(13)</span>
          </div>
          ${this.renderTable()}
        </div>
      </div>
    `;
  }

  renderTopbar() {
    return html`
      <div class="topbar">
        ${NAV.map(
          (item) => html`
            <div class="nav-item">
              ${icon(item.icon, 26)}
              <span class="nav-label">${item.label}</span>
            </div>
          `
        )}
        <div class="nav-item">
          ${peopleTile(38, 40, "nav-logo")}
          <span class="nav-label">Gestion des Talents</span>
          <span class="nav-caret"></span>
        </div>
        <div class="top-actions">
          ${icon("print", 32)}
          <span class="help">${icon("question", 32)}</span>
          <div class="avatar">${icon("user", 30)}</div>
          <span class="user-name">Marcus</span>
          ${icon("chevron", 21)}
        </div>
      </div>
    `;
  }

  renderSidebar() {
    return html`
      <div class="sidebar">
        <div class="search">
          ${icon("search", 30)}
          <span class="search-text">Rechercher</span>
          <span class="search-arrow"></span>
        </div>
        <div class="menu">
          ${SIDE.map(
            ([ic, label]) => html`
              <div class="menu-item">
                <span class="menu-icon">${icon(ic, 30)}</span>
                <span>${label}</span>
              </div>
            `
          )}
        </div>
      </div>
    `;
  }

  renderTable() {
    return html`
      <div class="table-wrap">
        <table>
          <colgroup>
            ${COLS.map((w) => html`<col width=${w} />`)}
          </colgroup>
          <thead>
            <tr class="filter-row">
              ${COLUMNS.map((c) => html`<th>${c.filter ? html`<div class="filter"></div>` : ""}</th>`)}
            </tr>
            <tr class="label-row">
              ${COLUMNS.map((c, i) => html`<th class=${i > 6 ? "num" : ""}>${c.label}</th>`)}
            </tr>
          </thead>
          <tbody>
            ${ROWS.map(
              ([ref, name, type, parent, manager, city, staff, target]) => html`
                <tr>
                  <td class="link">${ref}</td>
                  <td>${name}</td>
                  <td><span class="pill">${type}</span></td>
                  <td class="link">
                    ${parent
                      ? html`<div class="with-icon">${peopleTile(30, 31, "parent-logo")}<span>${parent}</span></div>`
                      : html`<span class="dash">-</span>`}
                  </td>
                  <td class="link">
                    <div class="with-icon">
                      <span class="manager-avatar">${icon("user", 30)}</span><span>${manager}</span>
                    </div>
                  </td>
                  <td class="link">
                    <div class="with-icon">
                      <span class="site-icon">${icon("building", 30)}</span>
                      <span class="site-name">NextCorp ${city}</span>
                    </div>
                  </td>
                  <td>${city}</td>
                  <td>${staff}</td>
                  <td>${target}</td>
                </tr>
              `
            )}
          </tbody>
        </table>
      </div>
    `;
  }
}
